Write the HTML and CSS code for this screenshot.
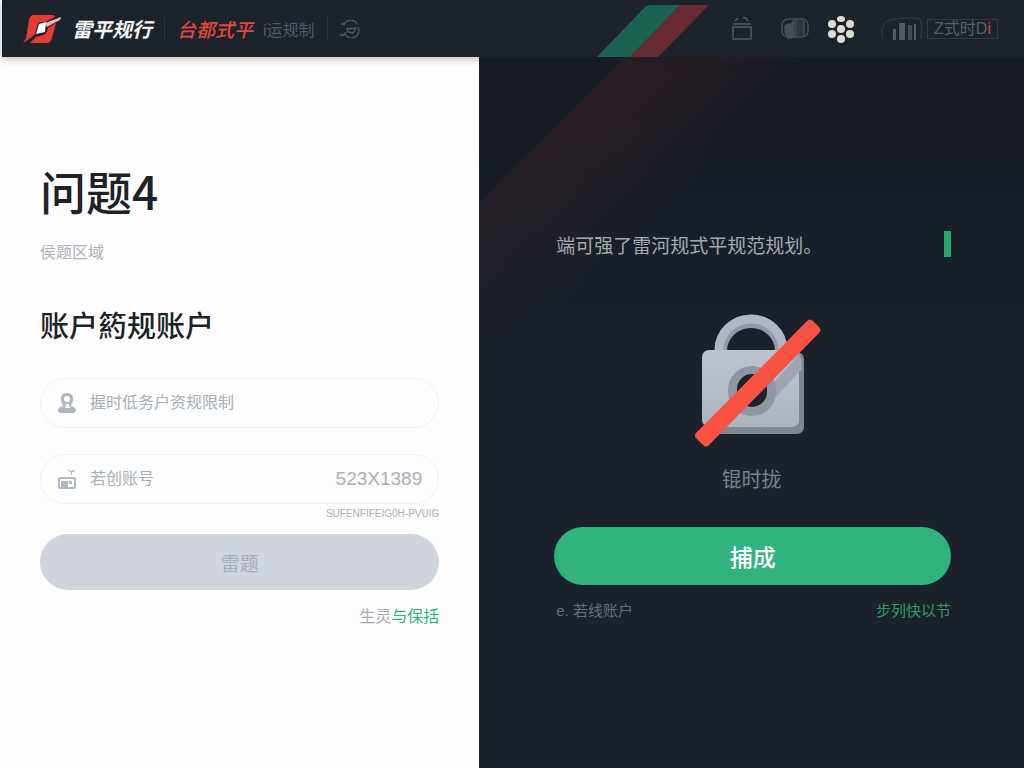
FILE: index.html
```
<!DOCTYPE html>
<html lang="zh-CN">
<head>
    <meta charset="UTF-8">
    <meta name="viewport" content="width=device-width, initial-scale=1.0">
    <title>问题4 - 账户</title>
    <link rel="stylesheet" href="styles.css">
</head>
<body>
    <div class="page">
        <header class="topbar">
            <a href="#" class="brand">
                <svg width="40" height="30" viewBox="0 0 40 30" aria-hidden="true">
                    <path d="M12 1h19q2 0 2 2l-10 5h-3q-4 0-5 4l-2 8-9 5L7 6q1-5 5-5z" fill="#e63b35"/>
                    <path d="M34 9l-4 15q-1 5-6 5H8l6-6 7-2q4-1 5-7z" fill="#e63b35"/>
                    <path d="M23 9l16-6q0 3-3 4l-11 6z" fill="#e9b6ae"/>
                    <path d="M17 10l7-2-1 10-9 2z" fill="#f8f8f6"/>
                    <path d="M1 29l3-5 10-5-5 5z" fill="#d43a34"/>
                </svg>
                <span class="brand-name">雷平规行</span>
            </a>
            <span class="divider"></span>
            <a href="#" class="tab-active">台都式平</a>
            <a href="#" class="tab">i运规制</a>
            <span class="divider"></span>
            <svg class="tab-icon" width="20" height="18" viewBox="0 0 20 18" fill="none" stroke="#535a62" stroke-width="1.3" aria-hidden="true">
                <path d="M4 5a7.200 7.200 0 0 1 13-1M18 7a7.200 7.200 0 0 1-13 7M7 9l9-1-3 5-5-1zM0 15h4l2-3M1 4h3"/>
            </svg>
            <svg class="stripes" width="112" height="57" viewBox="0 0 112 57" aria-hidden="true">
                <path d="M0 57L46 9q4-4 8-4h29L33 57z" fill="#1a6350"/>
                <path d="M33 57L83 5h29L61 57z" fill="#672b34"/>
            </svg>
            <nav class="tools">
                <button type="button" aria-label="日历">
                    <svg width="22" height="26" viewBox="0 0 22 26" fill="none" stroke="#555a61" stroke-width="1.500">
                        <rect x="2" y="11" width="18" height="12"/>
                        <path d="M2 8h18M4 5l3-3M12 2h3l2 3"/>
                    </svg>
                </button>
                <button type="button" aria-label="设备">
                    <svg width="28" height="24" viewBox="0 0 28 24" fill="none" stroke="#484e56" stroke-width="1.500">
                        <rect x="1" y="2" width="26" height="18" rx="6"/>
                        <rect x="16" y="3" width="7" height="16" fill="#2f363e" stroke="none"/>
                        <path d="M4 9q3-3 5-1l4-4v16q-9 1-9-6zM15 3v17M23 4v15M6 21h5" fill="#484e56"/>
                    </svg>
                </button>
                <button type="button" aria-label="应用">
                    <svg width="28" height="28" viewBox="0 0 28 28" fill="#dedbd3">
                        <ellipse cx="14" cy="4" rx="4" ry="3"/>
                        <ellipse cx="5" cy="9" rx="4" ry="4"/>
                        <ellipse cx="23" cy="9" rx="4" ry="4"/>
                        <ellipse cx="14" cy="14" rx="4" ry="4"/>
                        <ellipse cx="5" cy="19" rx="4" ry="4"/>
                        <ellipse cx="23" cy="19" rx="4" ry="4"/>
                        <ellipse cx="14" cy="24" rx="4" ry="4"/>
                    </svg>
                </button>
                <button type="button" aria-label="统计">
                    <svg width="42" height="28" viewBox="0 0 42 28" fill="#555b63">
                        <path d="M2 24c-2-9-1-17 7-19 10-2 20-3 29-1 3 1 3 10 2 20" fill="none" stroke="#2b3138" stroke-width="2"/>
                        <rect x="12" y="14" width="3" height="11"/>
                        <rect x="18" y="8" width="6" height="17"/>
                        <rect x="27" y="10" width="4" height="15" opacity="0.7"/>
                        <rect x="33" y="9" width="2" height="16"/>
                    </svg>
                </button>
                <span class="badge">Z式时D<span class="badge-mark">i</span></span>
            </nav>
        </header>

        <main class="panels">
            <section class="panel-light">
                <h1>问题4</h1>
                <p class="subtitle">侯题区域</p>
                <h2>账户箹规账户</h2>
                <form>
                    <div class="field">
                        <svg width="20" height="22" viewBox="0 0 20 22" fill="#b1b7c2" aria-hidden="true">
                            <path fill-rule="evenodd" d="M10 1c4 0 6 2 6 6 0 3-1 4-2 7 3 1 5 2 5 4s-1 3-3 3H4c-2 0-3-1-3-3s2-3 5-4C5 11 4 10 4 7c0-4 2-6 6-6zm0 3C8 4 7 5 7 7s1 3 3 3 3-1 3-3-1-3-3-3zM9 12l-1 4h5l-1-4z"/>
                        </svg>
                        <input type="text" aria-label="账户" placeholder="握时低务户资规限制">
                    </div>
                    <div class="field">
                        <svg width="20" height="22" viewBox="0 0 20 22" fill="#b1b7c2" aria-hidden="true">
                            <path fill-rule="evenodd" d="M3 9h14q2 0 2 2v8q0 2-2 2H3q-2 0-2-2v-8q0-2 2-2zm0 2v8h14v-8z"/>
                            <path d="M10 1c2 2 5 2 8 1l-1 2h-2v3h-1V4c-2 0-3-1-4-3zM4 13h7v6H4zM12 13h3v3h-3z"/>
                        </svg>
                        <input type="text" aria-label="账号" placeholder="若创账号">
                        <output class="code">523X1389</output>
                    </div>
                    <p class="hint">SUFENFIFEIG0H-PVUIG</p>
                    <button type="button" class="btn btn-disabled" disabled>雷题</button>
                </form>
                <p class="switch">生灵<a href="#">与保括</a></p>
            </section>

            <section class="panel-dark">
                <div class="notice">
                    <p>端可强了雷河规式平规范规划。</p>
                    <span class="marker"></span>
                </div>
                <figure class="locked">
                    <svg width="128" height="136" viewBox="0 0 128 136" aria-hidden="true">
                        <defs>
                            <linearGradient id="body" x1="0" y1="0" x2="0" y2="1">
                                <stop offset="0" stop-color="#bdc4cf"/>
                                <stop offset="1" stop-color="#acb4c0"/>
                            </linearGradient>
                        </defs>
                        <path d="M28 44V38a30 29 0 0 1 60 0v6" fill="none" stroke="#9299a8" stroke-width="12"/>
                        <path d="M26 44V37a32 31 0 0 1 64 0v7" fill="none" stroke="#b0b6c4" stroke-width="9"/>
                        <rect x="11" y="39" width="100" height="82" rx="7" fill="#7f8791"/>
                        <rect x="9" y="37" width="97" height="77" rx="7" fill="url(#body)"/>
                        <path d="M106 41l3 6v9L80 87l-4-12z" fill="#9ca5b1"/>
                        <rect x="35" y="53" width="48" height="50" rx="24" fill="#8d96a2"/>
                        <rect x="44" y="61" width="30" height="33" rx="15" fill="#1b222c"/>
                        <path d="M3 120L114 8q3-3 6 0l6 6q3 3 0 6L16 132q-3 3-6 0l-7-7q-2-2 0-5z" fill="#f95245"/>
                    </svg>
                    <figcaption>锟时拢</figcaption>
                </figure>
                <button type="button" class="btn btn-primary">捕成</button>
                <div class="links">
                    <span>e. 若线账户</span>
                    <a href="#">步列快以节</a>
                </div>
            </section>
        </main>
    </div>
</body>
</html>
```
FILE: styles.css
```
* {
    margin: 0;
    padding: 0;
    box-sizing: border-box;
}

body {
    font-family: "Liberation Sans", "Noto Sans CJK SC", sans-serif;
    color: #1d2228;
    background-color: #fdfdfd;
}

a {
    text-decoration: none;
}

button {
    border: none;
    background: none;
    font-family: inherit;
    cursor: pointer;
}

svg {
    display: block;
    flex-shrink: 0;
}

.page {
    display: flex;
    flex-direction: column;
    min-height: 100vh;
    padding-left: 2px;
}

/* top bar */
.topbar {
    position: relative;
    display: flex;
    align-items: center;
    height: 57px;
    padding: 0 26px 0 20px;
    white-space: nowrap;
    background: #1c232b;
    box-shadow: 0 2px 8px rgba(28, 35, 43, 0.3);
}

.brand {
    display: flex;
    align-items: center;
    gap: 10px;
}

.brand-name {
    color: #f4f4f4;
    font-size: 20px;
    font-weight: bold;
    font-style: italic;
}

.divider {
    width: 1px;
    height: 24px;
    margin: 0 12px;
    background: #2f363e;
}

.tab-active {
    color: #e0473e;
    font-size: 19px;
    font-weight: 500;
    font-style: italic;
}

.tab {
    margin-left: 10px;
    color: #535a62;
    font-size: 16px;
}

.stripes {
    margin-left: auto;
}

.tools {
    display: flex;
    align-items: center;
    gap: 18px;
    margin-left: 22px;
}

.tools button:first-child {
    margin-right: 10px;
}

.tools button:nth-child(4) {
    margin-left: 8px;
}

.badge {
    margin-left: -14px;
    padding: 0 6px;
    border: 1px solid #343a42;
    color: #5b6066;
    font-size: 16px;
    line-height: 18px;
}

.badge-mark {
    color: #b7513b;
}

/* panels */
.panels {
    display: flex;
    flex: 1;
}

.panel-light {
    width: 46.700%;
    padding: 105px 40px 40px 38px;
}

h1 {
    font-family: "Noto Sans CJK SC", sans-serif;
    font-size: 46px;
    font-weight: 500;
    line-height: 56px;
}

.subtitle {
    margin-top: 23px;
    color: #aeb2b9;
    font-size: 16px;
    line-height: 24px;
}

h2 {
    margin-top: 42px;
    font-size: 29px;
    font-weight: 500;
    line-height: 40px;
}

form {
    margin-top: 31px;
}

.field {
    display: flex;
    align-items: center;
    gap: 13px;
    height: 50px;
    padding: 0 16px;
    border: 1px solid #eff0f2;
    border-radius: 25px;
}

.field + .field {
    margin-top: 26px;
}

.field input {
    flex: 1;
    min-width: 0;
    border: none;
    outline: none;
    background: none;
    font-family: inherit;
    font-size: 16px;
}

.field input::placeholder {
    color: #a7afb9;
}

.code {
    color: #a7afb9;
    font-size: 19px;
}

.hint {
    margin-top: 2px;
    color: #a7afb9;
    font-size: 10px;
    line-height: 16px;
    text-align: right;
}

.btn {
    display: block;
    width: 100%;
    border-radius: 29px;
}

.btn-disabled {
    height: 56px;
    margin-top: 12px;
    background: #d0d4dd;
    color: #a7adb9;
    font-size: 19px;
    cursor: default;
}

.switch {
    margin-top: 15px;
    color: #a7adb3;
    font-size: 16px;
    line-height: 24px;
    text-align: right;
}

.switch a {
    color: #2bb57c;
}

.panel-dark {
    flex: 1;
    padding: 174px 73px 40px 75px;
    background:
        linear-gradient(180deg, transparent 60px, #1b222b 340px),
        linear-gradient(135deg, transparent 102px, #2a1e25 104px, #261e25 160px, transparent 240px),
        #171c25;
}

.notice {
    display: flex;
    align-items: center;
    justify-content: space-between;
    height: 26px;
    padding-left: 2px;
    color: #a5a9ae;
    font-size: 19px;
}

.marker {
    width: 7px;
    height: 26px;
    background: #28a56c;
}

.locked {
    display: flex;
    flex-direction: column;
    align-items: center;
    gap: 17px;
    margin-top: 56px;
    padding-left: 8px;
}

.locked figcaption {
    margin-right: 10px;
    color: #7c8188;
    font-size: 20px;
    line-height: 28px;
}

.btn-primary {
    height: 58px;
    margin-top: 33px;
    background: #30b37e;
    color: #ffffff;
    font-size: 23px;
    font-weight: 500;
}

.links {
    display: flex;
    justify-content: space-between;
    margin-top: 14px;
    padding-left: 2px;
    color: #686d74;
    font-size: 15px;
    line-height: 24px;
}

.links a {
    color: #2b9d66;
}

@media (max-width: 768px) {
    .panels {
        flex-direction: column;
    }

    .panel-light {
        width: 100%;
    }

    .stripes {
        display: none;
    }
}
```
